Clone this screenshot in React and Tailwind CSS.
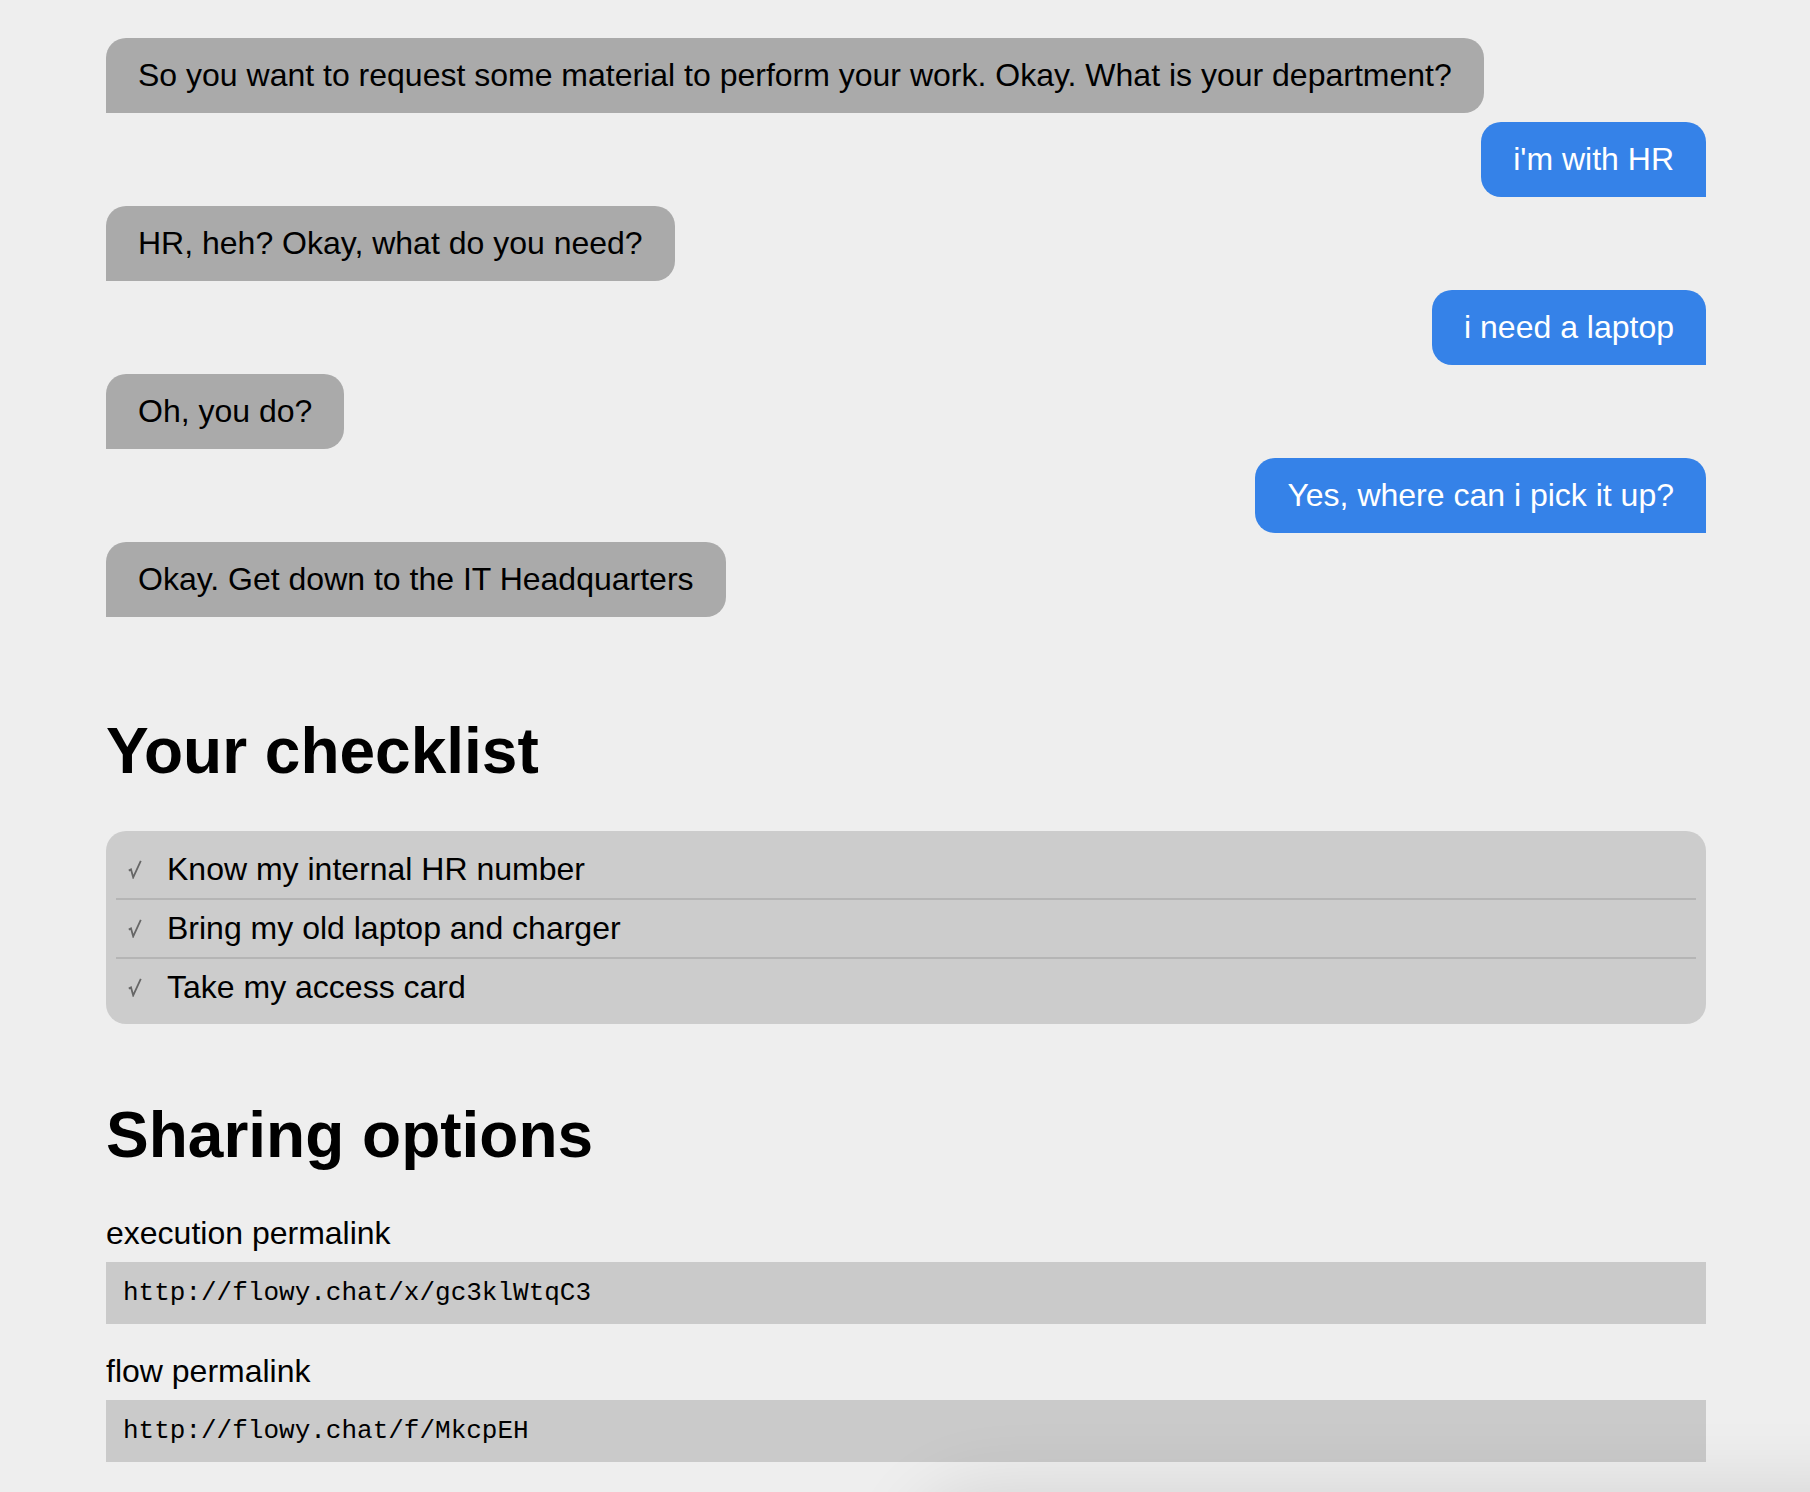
import React from "react";

const messages = [
  { from: "bot", text: "So you want to request some material to perform your work. Okay. What is your department?" },
  { from: "me", text: "i'm with HR" },
  { from: "bot", text: "HR, heh? Okay, what do you need?" },
  { from: "me", text: "i need a laptop" },
  { from: "bot", text: "Oh, you do?" },
  { from: "me", text: "Yes, where can i pick it up?" },
  { from: "bot", text: "Okay. Get down to the IT Headquarters" },
];

const checklist = [
  "Know my internal HR number",
  "Bring my old laptop and charger",
  "Take my access card",
];

function Check() {
  return (
    <svg width="14" height="19" viewBox="0 0 14 19" className="block">
      <path d="M0.8 10.6 L3 9.4 L5.2 17.4 L12.8 0.8" fill="none" stroke="#666666" strokeWidth="1.8" strokeLinejoin="miter" />
    </svg>
  );
}

export default function App() {
  return (
    <div
      className="min-h-screen bg-[#eeeeee] text-black"
      style={{ fontFamily: '"Liberation Sans", Arial, Helvetica, sans-serif' }}
    >
      <div className="ml-[106px] w-[1600px] pt-[38px]">
        <div className="flex flex-col gap-[9px]">
          {messages.map((m, i) =>
            m.from === "bot" ? (
              <div key={i} className="flex justify-start">
                <div className="rounded-[20px] rounded-bl-none bg-[#aaaaaa] px-[32px] py-[19px] text-[32px] leading-[37px] text-black">
                  {m.text}
                </div>
              </div>
            ) : (
              <div key={i} className="flex justify-end">
                <div className="rounded-[20px] rounded-br-none bg-[#3582e8] px-[32px] py-[19px] text-[32px] leading-[37px] text-white">
                  {m.text}
                </div>
              </div>
            )
          )}
        </div>

        <h1 className="mt-[97px] text-[64px] font-bold leading-[74px]">Your checklist</h1>

        <div className="mt-[43px] rounded-[20px] bg-[#cccccc] px-[10px] pt-[10px] pb-[8px]">
          {checklist.map((item, i) => (
            <div
              key={i}
              className={
                "flex items-center px-[12px] py-[10px] text-[32px] leading-[37px] " +
                (i < checklist.length - 1 ? "border-b-2 border-[#b5b5b5]" : "")
              }
            >
              <span className="w-[39px] shrink-0">
                <Check />
              </span>
              <span>{item}</span>
            </div>
          ))}
        </div>

        <h1 className="mt-[74px] text-[64px] font-bold leading-[74px]">Sharing options</h1>

        <div className="mt-[43px] text-[32px] leading-[37px]">execution permalink</div>
        <div
          className="mt-[10px] bg-[#cacaca] px-[17px] py-[16px] text-[26px] leading-[30px] text-black"
          style={{ fontFamily: '"Liberation Mono", "Courier New", monospace' }}
        >
          http://flowy.chat/x/gc3klWtqC3
        </div>

        <div className="mt-[29px] text-[32px] leading-[37px]">flow permalink</div>
        <div
          className="mt-[10px] bg-[#cacaca] px-[17px] py-[16px] text-[26px] leading-[30px] text-black"
          style={{ fontFamily: '"Liberation Mono", "Courier New", monospace' }}
        >
          http://flowy.chat/f/MkcpEH
        </div>
        <div className="h-[40px]" />
      </div>

      <div className="pointer-events-none fixed left-[930px] right-[-100px] top-[1510px] h-[200px] rounded-[60px] bg-[#dddddd] shadow-[0_0_70px_25px_rgba(0,0,0,0.10)]" />
    </div>
  );
}
